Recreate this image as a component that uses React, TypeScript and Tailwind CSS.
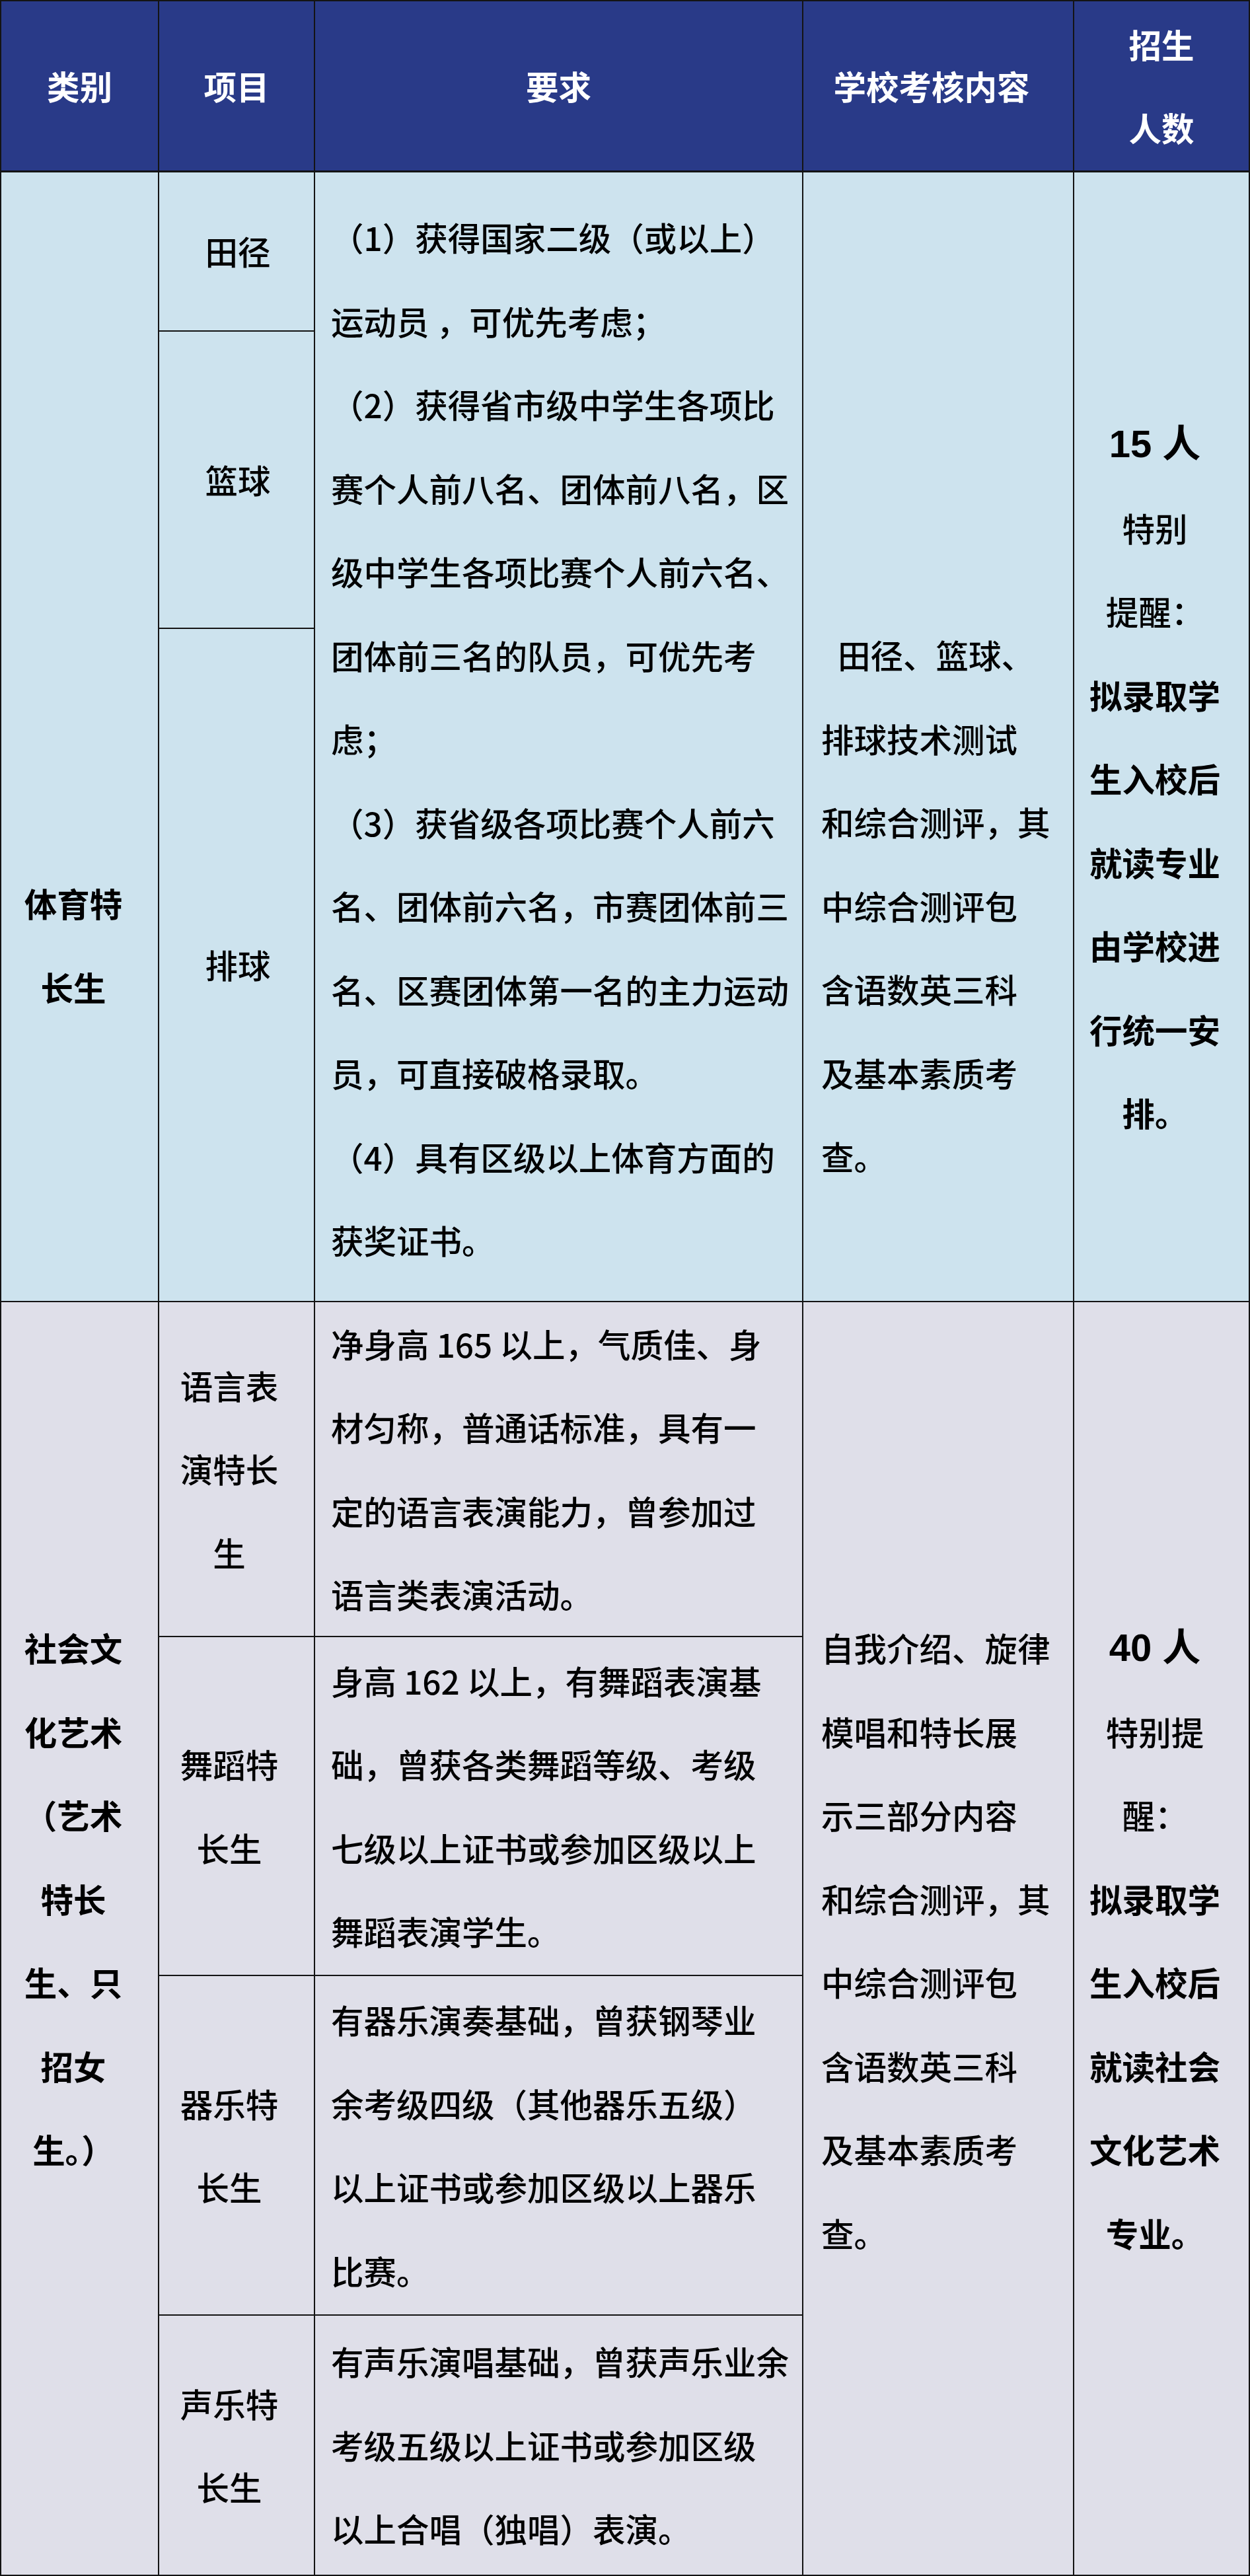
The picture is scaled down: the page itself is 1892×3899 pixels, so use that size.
const sportsReq = [
  "（1）获得国家二级（或以上）",
  "运动员 ，可优先考虑；",
  "（2）获得省市级中学生各项比",
  "赛个人前八名、团体前八名，区",
  "级中学生各项比赛个人前六名、",
  "团体前三名的队员，可优先考",
  "虑；",
  "（3）获省级各项比赛个人前六",
  "名、团体前六名，市赛团体前三",
  "名、区赛团体第一名的主力运动",
  "员，可直接破格录取。",
  "（4）具有区级以上体育方面的",
  "获奖证书。",
];

const sportsCheck = ["排球技术测试", "和综合测评，其", "中综合测评包", "含语数英三科", "及基本素质考", "查。"];

const artsCheck = [
  "自我介绍、旋律",
  "模唱和特长展",
  "示三部分内容",
  "和综合测评，其",
  "中综合测评包",
  "含语数英三科",
  "及基本素质考",
  "查。",
];

const artsRows = [
  {
    name: ["语言表", "演特长", "生"],
    req: ["净身高 165 以上，气质佳、身", "材匀称，普通话标准，具有一", "定的语言表演能力，曾参加过", "语言类表演活动。"],
    h: "h-[507px] border-b-2",
  },
  {
    name: ["舞蹈特", "长生"],
    req: ["身高 162 以上，有舞蹈表演基", "础，曾获各类舞蹈等级、考级", "七级以上证书或参加区级以上", "舞蹈表演学生。"],
    h: "h-[513px] border-b-2",
  },
  {
    name: ["器乐特", "长生"],
    req: ["有器乐演奏基础，曾获钢琴业", "余考级四级（其他器乐五级）", "以上证书或参加区级以上器乐", "比赛。"],
    h: "h-[514px] border-b-2",
  },
  {
    name: ["声乐特", "长生"],
    req: ["有声乐演唱基础，曾获声乐业余", "考级五级以上证书或参加区级", "以上合唱（独唱）表演。"],
    h: "flex-1",
  },
];

function Lines({ lines }: { lines: string[] }) {
  return (
    <>
      {lines.map((l, i) => (
        <div key={i} className="whitespace-pre">
          {l}
        </div>
      ))}
    </>
  );
}

// last column: headcount + reminder, reminder body is bold
function Quota({ count, plain, bold, top }: { count: string; plain: string[]; bold: string[]; top: string }) {
  return (
    <div className={`flex-1 pr-[20px] text-center ${top}`}>
      <div className="font-['Liberation_Sans','Noto_Sans_CJK_SC',sans-serif] text-[58px] font-bold">{count}</div>
      <Lines lines={plain} />
      <div className="font-bold">
        <Lines lines={bold} />
      </div>
    </div>
  );
}

export default function App() {
  return (
    <div className="flex h-[3899px] w-[1892px] flex-col border-2 border-[#141414] font-['Noto_Sans_CJK_SC',sans-serif] text-[49.5px] leading-[126.5px] font-medium text-black [&_*]:border-[#141414]">
      {/* header */}
      <div className="flex h-[259px] shrink-0 border-b-[3px] bg-[#293a88] font-bold text-white">
        <div className="flex w-[239px] items-center justify-center border-r-2">类别</div>
        <div className="flex w-[236px] items-center justify-center border-r-2">项目</div>
        <div className="flex w-[739px] items-center justify-center border-r-2">要求</div>
        <div className="flex w-[410px] items-center justify-center border-r-2 pr-[20px]">学校考核内容</div>
        <div className="flex flex-1 flex-col items-center justify-center">
          <div>招生</div>
          <div>人数</div>
        </div>
      </div>

      {/* 体育特长生 */}
      <div className="flex h-[1710px] shrink-0 border-b-2 bg-[#cde3ee]">
        <div className="w-[239px] border-r-2 pt-[1043px] pr-[19px] text-center font-bold">
          <Lines lines={["体育特", "长生"]} />
        </div>
        <div className="flex w-[236px] flex-col border-r-2">
          <div className="flex h-[241px] items-center justify-center border-b-2 pl-[4px]">田径</div>
          <div className="flex h-[450px] items-center justify-center border-b-2 pl-[4px]">篮球</div>
          <div className="flex flex-1 items-center justify-center pl-[4px]">排球</div>
        </div>
        <div className="w-[739px] border-r-2 pt-[35px] pl-[24px]">
          <Lines lines={sportsReq} />
        </div>
        <div className="w-[410px] border-r-2 pt-[667px] pl-[27px]">
          <div className="pl-[25px]">田径、篮球、</div>
          <Lines lines={sportsCheck} />
        </div>
        <Quota
          top="pt-[348px]"
          count="15 人"
          plain={["特别", "提醒："]}
          bold={["拟录取学", "生入校后", "就读专业", "由学校进", "行统一安", "排。"]}
        />
      </div>

      {/* 社会文化艺术 */}
      <div className="flex flex-1 bg-[#dfdfe9]">
        <div className="w-[239px] border-r-2 pt-[460px] pr-[19px] text-center font-bold">
          <Lines lines={["社会文", "化艺术", "（艺术", "特长", "生、只", "招女", "生。）"]} />
        </div>
        <div className="flex w-[975px] flex-col border-r-2">
          {artsRows.map((r, i) => (
            <div key={i} className={`flex ${r.h}`}>
              <div className="flex w-[236px] flex-col items-center justify-center border-r-2 pr-[22px] text-center">
                <Lines lines={r.name} />
              </div>
              <div className="flex flex-1 flex-col justify-center pl-[24px]">
                <Lines lines={r.req} />
              </div>
            </div>
          ))}
        </div>
        <div className="w-[410px] border-r-2 pt-[460px] pl-[27px]">
          <Lines lines={artsCheck} />
        </div>
        <Quota
          top="pt-[460px]"
          count="40 人"
          plain={["特别提", "醒："]}
          bold={["拟录取学", "生入校后", "就读社会", "文化艺术", "专业。"]}
        />
      </div>
    </div>
  );
}
